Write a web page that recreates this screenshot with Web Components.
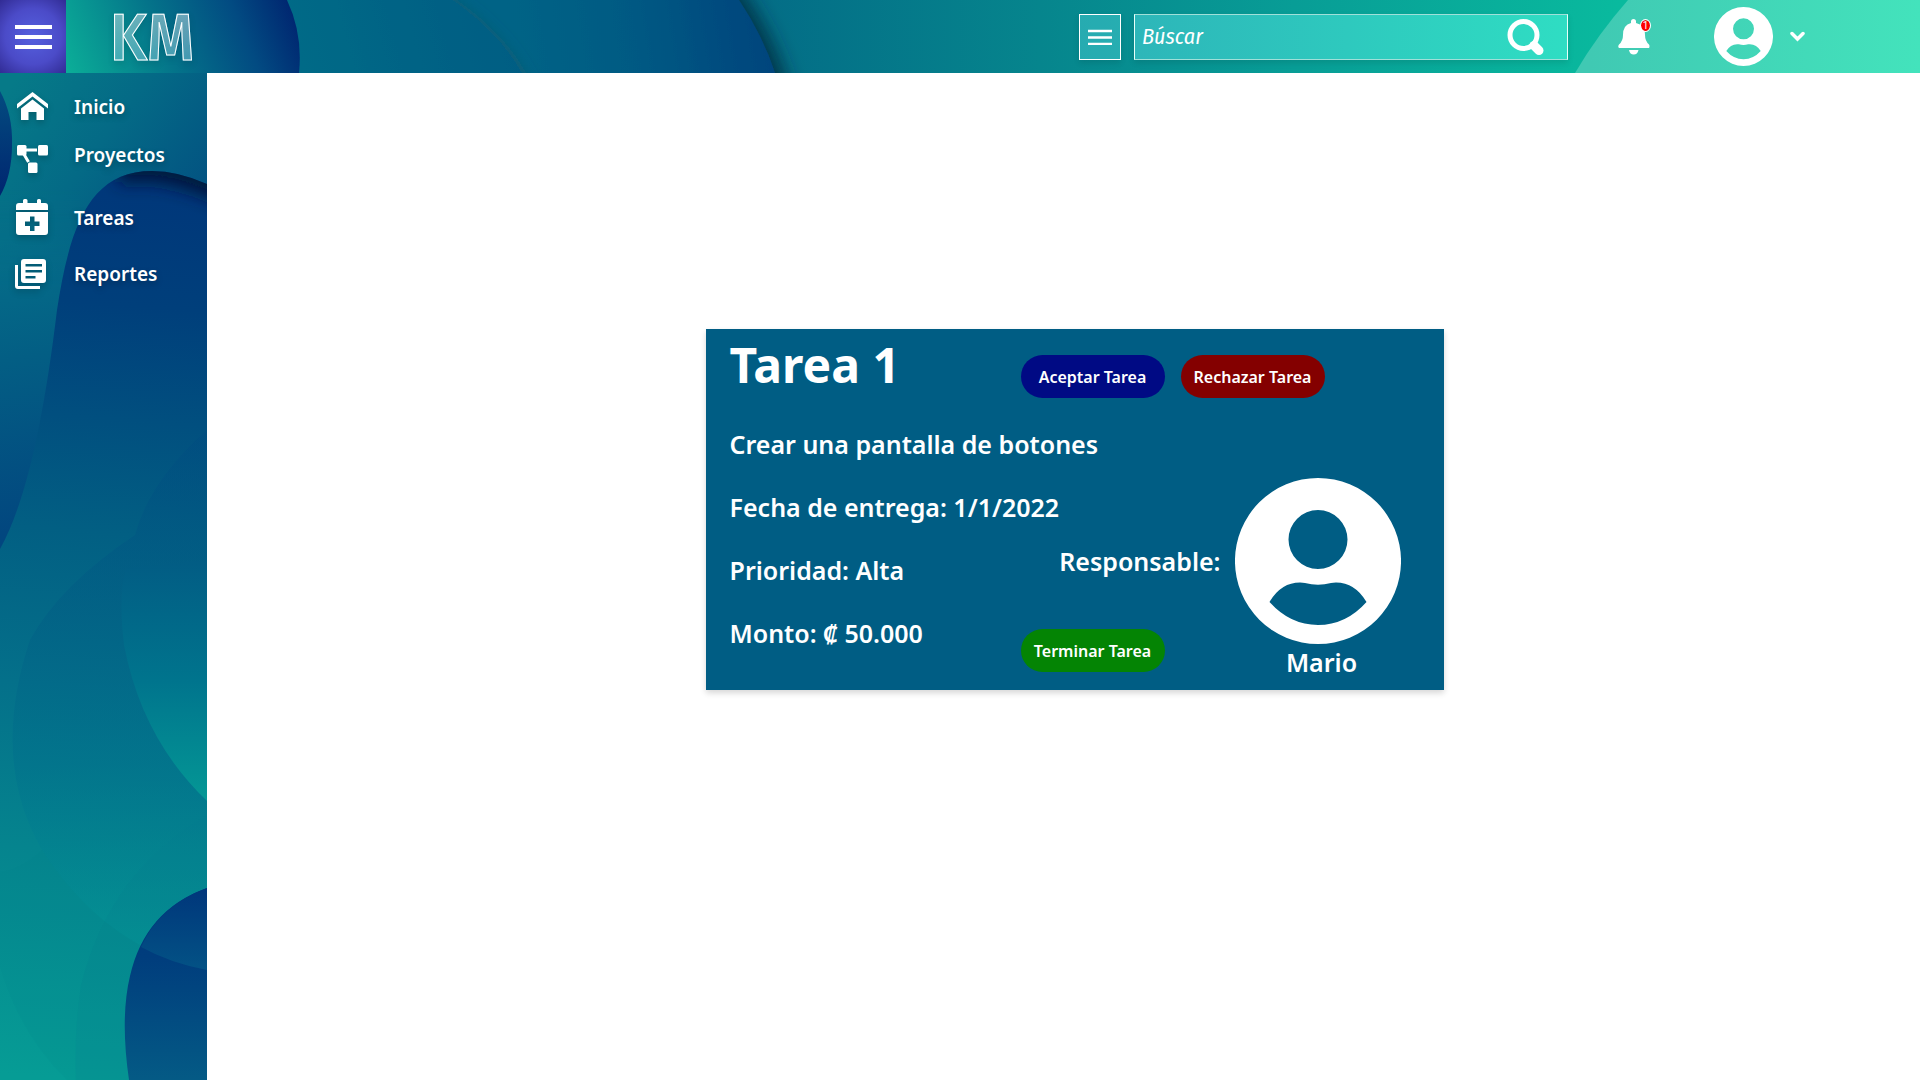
<!DOCTYPE html>
<html lang="es">
<head>
<meta charset="utf-8">
<title>KM - Tareas</title>
<style>
  html, body { margin: 0; min-height: 100%; background: #fff; }
  body { font-family: "Noto Sans", "Open Sans", sans-serif; color: #fff; }
</style>
</head>
<body>
<km-app>
  <km-header slot="header"></km-header>
  <km-sidebar slot="sidebar">
    <km-nav-item icon="home">Inicio</km-nav-item>
    <km-nav-item icon="projects">Proyectos</km-nav-item>
    <km-nav-item icon="tasks">Tareas</km-nav-item>
    <km-nav-item icon="reports">Reportes</km-nav-item>
  </km-sidebar>
  <km-task-card>
    <span slot="title">Tarea 1</span>
    <span slot="description">Crear una pantalla de botones</span>
    <span slot="due">Fecha de entrega: 1/1/2022</span>
    <span slot="priority">Prioridad: Alta</span>
    <span slot="amount">Monto: ₡ 50.000</span>
    <span slot="owner">Mario</span>
  </km-task-card>
</km-app>

<script>
const AVATAR = `<svg class="avatar" viewBox="0 0 166 166" aria-hidden="true"><path fill="#fff" fill-rule="evenodd" d="M83 0a83 83 0 1 1 0 166a83 83 0 1 1 0-166ZM83 32a29.500 29.500 0 1 0 0 59a29.500 29.500 0 1 0 0-59ZM34.500 124Q46 104.500 65 104.500Q68 104.500 70 105Q83 108.500 96 105Q98 104.500 101 104.500Q120 104.500 131.500 124Q111 147 83 147Q55 147 34.500 124Z"/></svg>`;

const ICONS = {
  home: `<svg viewBox="0 0 34 36"><path fill="#fff" d="M16.500 3L32 15V19.500L16.500 7.500L1 19.500V15Z"/><path fill="#fff" d="M16.500 10.500L28 19.500V31H20.500V23H12.500V31H5V19.500Z"/></svg>`,
  projects: `<svg viewBox="0 0 34 36"><g fill="#fff"><rect x="1" y="8" width="9.500" height="10.500" rx="1.500"/><rect x="22" y="8" width="10" height="10.500" rx="1.500"/><rect x="12" y="25.500" width="9.500" height="10.500" rx="1.500"/></g><path d="M9 13H21M7.500 16.500L12.500 25" stroke="#fff" stroke-width="3" fill="none"/></svg>`,
  tasks: `<svg viewBox="0 0 34 36"><path fill="#fff" d="M7 3V.5Q7-1 8.500-1H10Q11.500-1 11.500 .5V3H21V.5Q21-1 22.500-1H23.500Q25-1 25 .5V3H29Q32 3 32 6V10H0V6Q0 3 3 3Z"/><path fill="#fff" fill-rule="evenodd" d="M0 12H32V32Q32 35 29 35H3Q0 35 0 32ZM14 16.500V21.500H9V26H14V31H18.500V26H23.500V21.500H18.500V16.500Z"/></svg>`,
  reports: `<svg viewBox="0 0 34 36"><path fill="#fff" fill-rule="evenodd" d="M8 3H27Q30 3 30 6V24Q30 27 27 27H8Q5 27 5 24V6Q5 3 8 3ZM9.500 8V10.500H26V8ZM9.500 14V16.500H26V14ZM9.500 20V22.500H19.500V20Z"/><path fill="#fff" d="M-1 9H2V30H24V33H2Q-1 33-1 30Z"/></svg>`
};

const define = (name, markup, setup) => {
  const template = document.createElement('template');
  template.innerHTML = markup;
  customElements.define(name, class extends HTMLElement {
    constructor() {
      super();
      this.attachShadow({ mode: 'open' }).append(template.content.cloneNode(true));
    }
    connectedCallback() { if (setup) setup(this); }
  });
};

define('km-app', `
  <style>
    :host { display: flex; flex-direction: column; min-height: 100vh; }
    .body { display: flex; flex: 1; }
    main { flex: 1; display: flex; justify-content: center; align-items: flex-start; padding: 256px 0 64px 22px; }
  </style>
  <slot name="header"></slot>
  <div class="body"><slot name="sidebar"></slot><main><slot></slot></main></div>`);

define('km-header', `
  <style>
    :host { display: flex; position: relative; align-items: center; height: 73px; isolation: isolate; }
    .art { position: absolute; inset: 0; width: 100%; height: 100%; z-index: -1; }
    button { border: 0; padding: 0; background: none; display: flex; align-items: center; justify-content: center; }
    svg { display: block; }
    .menu { width: 66px; height: 73px; background: radial-gradient(circle, #5560de 0, #4b4bc8 28px, #302a92 50px); }
    .logo { align-self: flex-start; margin-left: 44px; font: 500 66px/76px "Fira Sans Condensed", "DejaVu Sans Condensed", sans-serif; color: transparent; -webkit-text-stroke: 1px #fff; background: linear-gradient(rgba(255,255,255,.46), rgba(120,215,240,.42)); -webkit-background-clip: text; background-clip: text; filter: drop-shadow(0 3px 3px rgba(0,0,0,.16)); }
    .tools { margin-left: auto; display: flex; align-items: center; }
    .filter { box-sizing: border-box; width: 42px; height: 46px; border: 1px solid #fff; background: rgba(84,220,224,.42); margin-right: 13px; box-shadow: 0 3px 6px rgba(0,0,0,.1); }
    .search { box-sizing: border-box; display: flex; align-items: center; width: 434px; height: 46px; border: 1px solid #e8fffa; border-top-color: #a0e0d9; border-bottom-color: #a0e0d9; background: linear-gradient(90deg, #2db6b9, #2fddc3); padding: 0 22px 0 7px; box-shadow: 0 3px 6px rgba(0,0,0,.1); }
    input { flex: 1; min-width: 0; border: 0; outline: 0; padding: 0; background: none; color: #fff; font: italic 400 22px/28px "Fira Sans Condensed", Roboto, sans-serif; }
    input::placeholder { color: #fff; opacity: 1; }
    .bell { position: relative; margin-left: 48px; width: 36px; height: 40px; }
    .badge { position: absolute; top: 3px; right: 2px; width: 9px; height: 11px; border-radius: 50%; background: #f00; outline: 1px solid #fff; font: 400 10px/11px Roboto, sans-serif; color: #fff; text-align: center; }
    .user { margin: 0 115px 0 62px; gap: 17px; }
    .avatar { width: 59px; height: 59px; }
  </style>
  <svg class="art" viewBox="0 0 1920 73" preserveAspectRatio="none" aria-hidden="true">
    <defs>
      <linearGradient id="a" gradientUnits="userSpaceOnUse" x1="70" y1="80" x2="290" y2="-10"><stop stop-color="#0bae98"/><stop offset=".42" stop-color="#04748a"/><stop offset=".75" stop-color="#024b82"/><stop offset="1" stop-color="#00236f"/></linearGradient>
      <linearGradient id="b" gradientUnits="userSpaceOnUse" x1="300" y1="60" x2="520" y2="0"><stop stop-color="#056a87"/><stop offset="1" stop-color="#025c83"/></linearGradient>
      <linearGradient id="c" gradientUnits="userSpaceOnUse" x1="510" y1="40" x2="760" y2="0"><stop stop-color="#056486"/><stop offset=".5" stop-color="#025983"/><stop offset="1" stop-color="#02457d"/></linearGradient>
      <linearGradient id="d" gradientUnits="userSpaceOnUse" x1="740" y1="0" x2="1620" y2="0"><stop stop-color="#036b86"/><stop offset=".34" stop-color="#06858d"/><stop offset=".63" stop-color="#089d96"/><stop offset="1" stop-color="#09ba9e"/></linearGradient>
      <linearGradient id="e" gradientUnits="userSpaceOnUse" x1="1590" y1="0" x2="1920" y2="0"><stop stop-color="#40c9b3"/><stop offset="1" stop-color="#43e3bc"/></linearGradient>
      <filter id="s" x="-20%" y="-60%" width="140%" height="220%"><feDropShadow dx="10" dy="0" stdDeviation="9" flood-color="#00283a" flood-opacity=".75"/></filter>
      <filter id="t" x="-20%" y="-60%" width="140%" height="220%"><feDropShadow dx="4" dy="0" stdDeviation="6" flood-color="#075c70" flood-opacity=".7"/></filter>
    </defs>
    <rect width="1920" height="73" fill="url(#d)"/>
    <path d="M0-60H700L739 0Q763 36 775 73L795 140H0Z" fill="url(#c)" filter="url(#s)"/>
    <path d="M0-30H420L453 0Q501 34 522 73L550 120H0Z" fill="url(#b)" filter="url(#t)"/>
    <path d="M0 0H287Q303 34 299 73H0Z" fill="url(#a)"/>
    <path d="M1628 0H1920V73H1575Q1598 34 1628 0Z" fill="url(#e)"/>
  </svg>
  <button class="menu" aria-label="Menú"><svg width="37" height="26" viewBox="0 0 37 26"><path d="M0 3H37M0 13H37M0 23H37" stroke="#fff" stroke-width="4"/></svg></button>
  <div class="logo">KM</div>
  <div class="tools">
    <button class="filter" aria-label="Filtros"><svg width="24" height="16" viewBox="0 0 24 16"><path d="M0 2H24M0 8.500H24M0 15H24" stroke="#fff" stroke-width="2.500"/></svg></button>
    <label class="search">
      <input type="text" aria-label="Búscar" placeholder="Búscar">
      <svg width="38" height="38" viewBox="0 0 38 38"><circle cx="16.500" cy="17" r="13.500" fill="none" stroke="#fff" stroke-width="5"/><path d="M27 27.500L32 32.500" stroke="#fff" stroke-width="9" stroke-linecap="round"/></svg>
    </label>
    <button class="bell" aria-label="Notificaciones"><svg width="32" height="36" viewBox="0 0 32 36"><path fill="#fff" d="M13 4V2.500Q13 0 15.500 0T18 2.500V4Q27 6 27 16Q27 22 31 25.500Q32 27 31 29H1Q-.5 27.500 1 25.500Q5 22 5 16Q5 6 13 4ZM11 31H20.500Q19.500 35.500 15.700 35.500T11 31Z"/></svg><span class="badge">1</span></button>
    <button class="user" aria-label="Cuenta">${AVATAR}<svg width="15" height="11" viewBox="0 0 15 11"><path d="M2 2.500L7.500 8L13 2.500" fill="none" stroke="#fff" stroke-width="3.500" stroke-linecap="round"/></svg></button>
  </div>`);

define('km-sidebar', `
  <style>
    :host { display: block; position: relative; width: 207px; isolation: isolate; overflow: hidden; }
    svg { position: absolute; inset: 0; width: 100%; height: 100%; z-index: -1; }
    nav { display: grid; grid-template-rows: 48px 63px 56px 44px; padding-top: 12px; }
  </style>
  <svg viewBox="0 73 207 1007" preserveAspectRatio="none" aria-hidden="true">
    <defs>
      <linearGradient id="a" gradientUnits="userSpaceOnUse" x1="0" y1="100" x2="190" y2="240"><stop stop-color="#067a88"/><stop offset=".45" stop-color="#046a86"/><stop offset="1" stop-color="#024f81"/></linearGradient>
      <linearGradient id="l" gradientUnits="userSpaceOnUse" x1="10" y1="240" x2="60" y2="530"><stop stop-color="#05708a"/><stop offset=".4" stop-color="#035e84"/><stop offset="1" stop-color="#02467f"/></linearGradient>
      <linearGradient id="fade" x1="0" y1="0" x2="0" y2="1"><stop stop-color="#fff" stop-opacity="0"/><stop offset=".3" stop-color="#fff"/></linearGradient>
      <mask id="m"><path d="M0 190H80V549H0Z" fill="url(#fade)"/></mask>
      <linearGradient id="b" gradientUnits="userSpaceOnUse" x1="150" y1="170" x2="80" y2="1080"><stop stop-color="#00367a"/><stop offset=".15" stop-color="#003f7b"/><stop offset=".4" stop-color="#025f83"/><stop offset=".57" stop-color="#04708a"/><stop offset=".75" stop-color="#05848e"/><stop offset="1" stop-color="#069c95"/></linearGradient>
      <linearGradient id="c" gradientUnits="userSpaceOnUse" x1="0" y1="430" x2="0" y2="970"><stop stop-color="#004b80"/><stop offset=".35" stop-color="#025e85"/><stop offset=".62" stop-color="#00708c"/><stop offset="1" stop-color="#049997"/></linearGradient>
      <linearGradient id="d" gradientUnits="userSpaceOnUse" x1="0" y1="560" x2="0" y2="800"><stop stop-color="#025c84"/><stop offset=".5" stop-color="#00748d"/><stop offset="1" stop-color="#049795"/></linearGradient>
      <linearGradient id="e" gradientUnits="userSpaceOnUse" x1="0" y1="890" x2="0" y2="1080"><stop stop-color="#00367b"/><stop offset=".35" stop-color="#003d7d"/><stop offset="1" stop-color="#045a85"/></linearGradient>
      <linearGradient id="g" gradientUnits="userSpaceOnUse" x1="0" y1="888" x2="0" y2="970"><stop stop-color="#00367b"/><stop offset="1" stop-color="#035285"/></linearGradient>
      <linearGradient id="f" gradientUnits="userSpaceOnUse" x1="0" y1="90" x2="0" y2="200"><stop stop-color="#034c80"/><stop offset="1" stop-color="#00246f"/></linearGradient>
      <clipPath id="k"><path d="M0 549Q36 485 57 310C70 225 90 171 152 171Q178 171 207 184V1080H0Z"/></clipPath>
      <filter id="s" x="-50%" y="-150%" width="200%" height="400%"><feGaussianBlur stdDeviation="9"/></filter>
    </defs>
    <rect y="73" width="207" height="1007" fill="url(#a)"/>
    <path d="M0 190H80V549H0Z" fill="url(#l)" mask="url(#m)"/>
    <path d="M0 91Q13 115 12 145Q12 175 0 196Z" fill="url(#f)"/>
    <g clip-path="url(#k)">
      <rect y="73" width="207" height="1007" fill="url(#b)"/>
      <path d="M118 172Q160 160 228 192" fill="none" stroke="#001638" stroke-width="24" filter="url(#s)"/>
      <path d="M207 430Q150 480 135 535Q60 585 30 640Q-10 760 42 850Q105 948 207 970Z" fill="url(#c)" opacity=".5"/>
      <path d="M126 568Q118 595 124 645Q142 739 207 801V560Z" fill="url(#d)"/>
      <path d="M207 815Q110 870 81 985Q74 1030 76 1080H207Z" fill="#047d8d" opacity=".16"/>
      <path d="M0 966Q20 1035 67 1080H207V970Q105 948 42 850Q20 870 0 872Z" fill="#047d8d" opacity=".1"/>
    </g>
    <path d="M207 888Q145 910 130 976Q120 1018 129 1080H207Z" fill="url(#e)"/>
    <path d="M207 888Q160 905 141 947Q170 963 207 970Z" fill="url(#g)"/>
  </svg>
  <nav><slot></slot></nav>`);

define('km-nav-item', `
  <style>
    :host { display: block; }
    a { display: flex; align-items: center; height: 44px; gap: 24px; padding-left: 16px; color: #fff; text-decoration: none; font: 600 19px/28px "Noto Sans", sans-serif; text-shadow: 0 3px 6px rgba(0,0,0,.25); }
    .icon { width: 34px; height: 36px; filter: drop-shadow(0 3px 3px rgba(0,0,0,.2)); }
    .icon svg { display: block; width: 34px; height: 36px; overflow: visible; }
  </style>
  <a href="#"><span class="icon"></span><slot></slot></a>`,
  el => { el.shadowRoot.querySelector('.icon').innerHTML = ICONS[el.getAttribute('icon')]; });

define('km-pill', `
  <style>
    :host { display: block; }
    button { width: 144px; height: 43px; border: 0; border-radius: 22px; padding: 0; background: var(--pill); color: #fff; font: 600 16px/22px "Noto Sans", sans-serif; white-space: nowrap; display: block; }
  </style>
  <button type="button"><slot></slot></button>`);

define('km-task-card', `
  <style>
    :host { display: grid; grid-template-columns: 291px 1fr; box-sizing: border-box; width: 738px; min-height: 361px; padding: 10px 43px 10px 24px; background: #005d84; box-shadow: 0 3px 6px rgba(0,0,0,.16); font: 600 25px/35px "Noto Sans", sans-serif; }
    .info { display: flex; flex-direction: column; white-space: nowrap; }
    h1 { margin: 0 0 36px; font: 700 48px/52px "Noto Sans", sans-serif; }
    p { margin: 0 0 28px; }
    p:last-child { margin: 0; }
    .side { display: flex; flex-direction: column; justify-content: space-between; }
    .row { display: flex; gap: 16px; padding-top: 16px; }
    .owner { display: grid; grid-template: 166px 36px / 1fr 166px; column-gap: 14px; }
    .label { grid-area: 1 / 1; justify-self: end; align-self: center; }
    .avatar { grid-area: 1 / 2; display: block; width: 166px; height: 166px; }
    .name { grid-area: 2 / 2; align-self: end; text-align: center; padding-left: 8px; }
    .finish { grid-area: 1 / 1 / 3 / 2; justify-self: start; align-self: end; margin-bottom: 8px; }
  </style>
  <div class="info">
    <h1><slot name="title"></slot></h1>
    <p><slot name="description"></slot></p>
    <p><slot name="due"></slot></p>
    <p><slot name="priority"></slot></p>
    <p><slot name="amount"></slot></p>
  </div>
  <div class="side">
    <div class="row">
      <km-pill style="--pill:#000a84">Aceptar Tarea</km-pill>
      <km-pill style="--pill:#840000">Rechazar Tarea</km-pill>
    </div>
    <div class="owner">
      <span class="label">Responsable:</span>
      ${AVATAR}
      <span class="name"><slot name="owner"></slot></span>
      <km-pill class="finish" style="--pill:#048404">Terminar Tarea</km-pill>
    </div>
  </div>`);
</script>
</body>
</html>
